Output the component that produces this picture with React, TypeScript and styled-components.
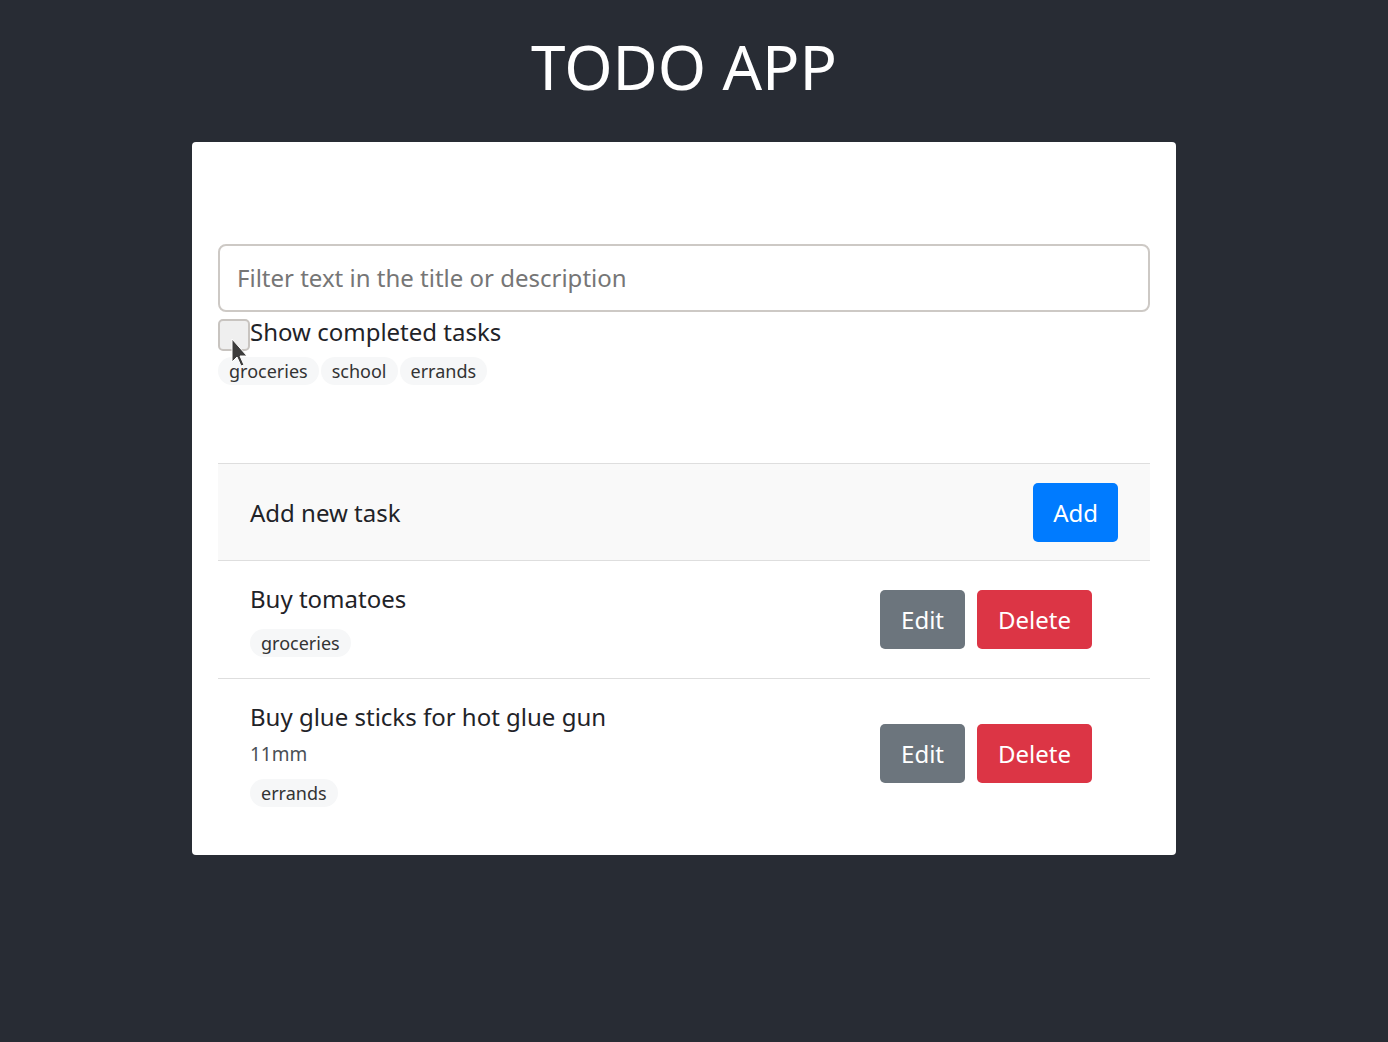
import React from "react";
import styled, { createGlobalStyle } from "styled-components";

const GlobalStyle = createGlobalStyle`
  html, body { margin: 0; padding: 0; }
  body {
    background: #282c34;
    font-family: "Noto Sans", "Open Sans", sans-serif;
    color: #212529;
    min-height: 1042px;
  }
  * { box-sizing: border-box; }
`;

const Page = styled.div`
  display: flex;
  flex-direction: column;
  align-items: center;
  padding-right: 20px;
`;

const Title = styled.h1`
  margin: 0;
  height: 142px;
  display: flex;
  align-items: center;
  justify-content: center;
  padding-bottom: 10px;
  color: #ffffff;
  font-size: 62px;
  font-weight: 400;
`;

const Card = styled.div`
  width: 984px;
  background: #ffffff;
  border-radius: 4px;
  padding: 102px 26px 27px;
`;

const FilterInput = styled.input`
  display: block;
  width: 100%;
  height: 68px;
  border: 2px solid #cdc9c5;
  border-radius: 8px;
  padding: 0 17px 2px;
  font-family: inherit;
  font-size: 24px;
  color: #212529;
  outline: none;
  &::placeholder { color: #767676; }
`;

const CheckRow = styled.label`
  position: relative;
  display: flex;
  align-items: flex-start;
  margin-top: 7px;
  height: 32px;
  font-size: 24px;
  line-height: 25px;
  color: #1f2328;
`;

const CheckBox = styled.span`
  width: 32px;
  height: 32px;
  border: 2px solid #c8c4c0;
  border-radius: 5px;
  background: #efefef;
  flex-shrink: 0;
`;

const Cursor = styled.svg`
  position: absolute;
  left: 13px;
  top: 19px;
`;

const TagRow = styled.div`
  display: flex;
  gap: 2px;
  margin-top: 6px;
`;

const Tag = styled.span`
  display: inline-flex;
  align-items: center;
  height: 28px;
  padding: 0 11px;
  border-radius: 14px;
  background: #f6f7f8;
  color: #333;
  font-size: 18px;
`;

const List = styled.div`
  margin-top: 78px;
  border-top: 1px solid #dedede;
`;

const AddRow = styled.div`
  display: flex;
  align-items: center;
  justify-content: space-between;
  height: 97px;
  padding: 0 32px;
  background: #f9f9f9;
  border-bottom: 1px solid #dedede;
  font-size: 24px;
  color: #1f2328;
`;

const Button = styled.button<{ $variant: "primary" | "secondary" | "danger" }>`
  height: 59px;
  padding: 0 21px;
  border: none;
  border-radius: 5px;
  font-family: inherit;
  font-size: 24px;
  color: #ffffff;
  background: ${(p) =>
    p.$variant === "primary" ? "#007bff" : p.$variant === "secondary" ? "#6c757d" : "#dc3545"};
`;

const AddButton = styled(Button)`
  padding: 0 20px;
`;

const TaskRow = styled.div<{ $last?: boolean }>`
  display: flex;
  align-items: center;
  justify-content: space-between;
  padding: 20px 58px 21px 32px;
  border-bottom: ${(p) => (p.$last ? "none" : "1px solid #dedede")};
`;

const TaskInfo = styled.div`
  display: flex;
  flex-direction: column;
  align-items: flex-start;
`;

const TaskTitle = styled.div`
  font-size: 24px;
  line-height: 36px;
  color: #1f2328;
`;

const TaskDesc = styled.div`
  font-size: 19px;
  line-height: 38px;
  color: #4a4f55;
`;

const TaskTags = styled.div<{ $afterDesc?: boolean }>`
  display: flex;
  gap: 2px;
  margin-top: ${(p) => (p.$afterDesc ? "6px" : "12px")};
`;

const Actions = styled.div`
  display: flex;
  gap: 12px;
`;

type Task = { title: string; desc?: string; tags: string[] };

const tasks: Task[] = [
  { title: "Buy tomatoes", tags: ["groceries"] },
  { title: "Buy glue sticks for hot glue gun", desc: "11mm", tags: ["errands"] },
];

export default function App() {
  return (
    <>
      <GlobalStyle />
      <Page>
        <Title>TODO APP</Title>
        <Card>
          <FilterInput placeholder="Filter text in the title or description" />
          <CheckRow>
            <CheckBox />
            Show completed tasks
            <Cursor width="20" height="30" viewBox="0 0 20 30">
              <path d="M1 1 L1 24 L6 19 L10 28 L13 27 L9 18 L16 18 Z" fill="#3d3d3d" stroke="#ffffff" strokeWidth="1" />
            </Cursor>
          </CheckRow>
          <TagRow>
            <Tag>groceries</Tag>
            <Tag>school</Tag>
            <Tag>errands</Tag>
          </TagRow>
          <List>
            <AddRow>
              Add new task
              <AddButton $variant="primary">Add</AddButton>
            </AddRow>
            {tasks.map((t, i) => (
              <TaskRow key={t.title} $last={i === tasks.length - 1}>
                <TaskInfo>
                  <TaskTitle>{t.title}</TaskTitle>
                  {t.desc && <TaskDesc>{t.desc}</TaskDesc>}
                  <TaskTags $afterDesc={!!t.desc}>
                    {t.tags.map((tag) => (
                      <Tag key={tag}>{tag}</Tag>
                    ))}
                  </TaskTags>
                </TaskInfo>
                <Actions>
                  <Button $variant="secondary">Edit</Button>
                  <Button $variant="danger">Delete</Button>
                </Actions>
              </TaskRow>
            ))}
          </List>
        </Card>
      </Page>
    </>
  );
}
